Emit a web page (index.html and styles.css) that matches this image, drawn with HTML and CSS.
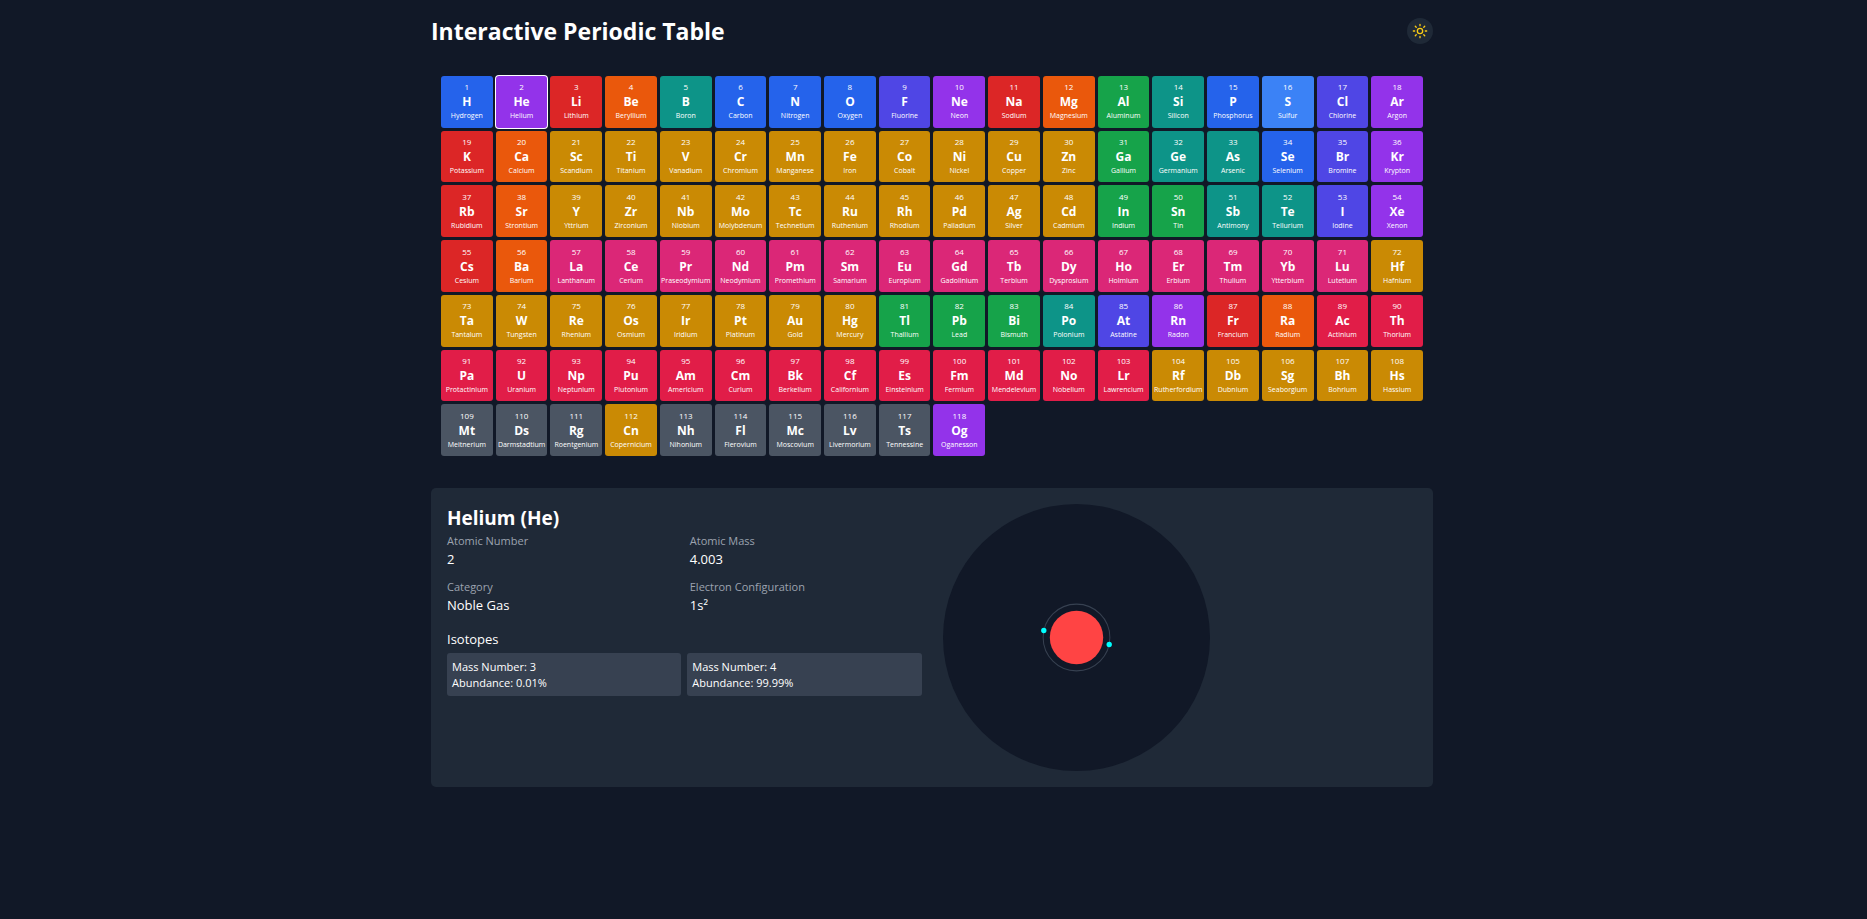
FILE: index.html
```html
<!DOCTYPE html>
<html lang="en">
<head>
<meta charset="utf-8">
<meta name="viewport" content="width=device-width, initial-scale=1">
<title>Interactive Periodic Table</title>
<link rel="stylesheet" href="styles.css">
</head>
<body>
<div class="container">
  <header class="header">
    <h1 class="title">Interactive Periodic Table</h1>
    <button class="theme-toggle" type="button" aria-label="Switch to light theme">
      <svg class="theme-icon" viewBox="0 0 24 24" fill="none" stroke="currentColor" stroke-width="2" stroke-linecap="round" stroke-linejoin="round" aria-hidden="true">
        <circle cx="12" cy="12" r="4"/>
        <path d="M12 2v2M12 20v2M4.93 4.93l1.41 1.41M17.66 17.66l1.41 1.41M2 12h2M20 12h2M6.34 17.66l-1.41 1.41M19.07 4.93l-1.41 1.41"/>
      </svg>
    </button>
  </header>

  <main>
    <div class="elements" id="elements"></div>

    <section class="details">
      <div class="info">
        <h2 class="name">Helium (He)</h2>
        <dl class="facts">
          <div><dt>Atomic Number</dt><dd>2</dd></div>
          <div><dt>Atomic Mass</dt><dd>4.003</dd></div>
          <div><dt>Category</dt><dd>Noble Gas</dd></div>
          <div><dt>Electron Configuration</dt><dd>1s²</dd></div>
        </dl>
        <h3 class="subhead">Isotopes</h3>
        <div class="isotopes">
          <div class="isotope"><p>Mass Number: 3</p><p>Abundance: 0.01%</p></div>
          <div class="isotope"><p>Mass Number: 4</p><p>Abundance: 99.99%</p></div>
        </div>
      </div>
      <svg class="atom" viewBox="0 0 400 400" role="img" aria-label="Helium atom with two electrons">
        <circle cx="200" cy="200" r="200" fill="#111827"/>
        <circle cx="200" cy="200" r="50" fill="none" stroke="#374151" stroke-width="1.5"/>
        <circle cx="200" cy="200" r="40" fill="#ff4444"/>
        <circle cx="151" cy="189.500" r="4" fill="#00ffff"/>
        <circle cx="249" cy="210.500" r="4" fill="#00ffff"/>
      </svg>
    </section>
  </main>
</div>
<script src="script.js"></script>
</body>
</html>
```
FILE: styles.css
```css
* {
  box-sizing: border-box;
  margin: 0;
  padding: 0;
}

body {
  min-height: 100vh;
  padding-right: 3px;
  background: #111827;
  color: #fff;
  font-family: "Open Sans", "Noto Sans", sans-serif;
  font-size: 13px;
  line-height: 18px;
}

.container {
  max-width: 1024px;
  margin: 0 auto;
  padding: 12px 11px;
}

.header {
  display: flex;
  align-items: center;
  justify-content: space-between;
  padding: 5px 0;
  margin-bottom: 16px;
}

.title {
  font-size: 23px;
  font-weight: 700;
  line-height: 28px;
}

.theme-toggle {
  display: flex;
  padding: 5px;
  border: 0;
  border-radius: 50%;
  background: #1f2937;
  color: #facc15;
  cursor: pointer;
}

.theme-icon {
  width: 16px;
  height: 16px;
}

.elements {
  display: grid;
  grid-template-columns: repeat(18, minmax(0, 1fr));
  gap: 3px;
  padding: 10px;
  margin-bottom: 22px;
}

.element {
  display: flex;
  flex-direction: column;
  align-items: center;
  justify-content: center;
  aspect-ratio: 1;
  border: 0;
  border-radius: 3px;
  color: #fff;
  font-family: inherit;
  white-space: nowrap;
  cursor: pointer;
}

.number {
  font-size: 8px;
  line-height: 12px;
}

.symbol {
  font-size: 12px;
  font-weight: 700;
  line-height: 17px;
}

.label {
  font-size: 7px;
  line-height: 12px;
}

.selected {
  box-shadow: 0 0 0 1px #fff;
}

.nonmetal { background: #2563eb; }
.sulfur { background: #3b82f6; }
.noble { background: #9333ea; }
.alkali { background: #dc2626; }
.alkaline { background: #ea580c; }
.metalloid { background: #0d9488; }
.halogen { background: #4f46e5; }
.post { background: #16a34a; }
.transition { background: #ca8a04; }
.lanthanide { background: #db2777; }
.actinide { background: #e11d48; }
.unknown { background: #4b5563; }

.details {
  display: grid;
  grid-template-columns: repeat(2, minmax(0, 1fr));
  gap: 21px;
  padding: 16px;
  border-radius: 5px;
  background: #1f2937;
}

.name {
  font-size: 19px;
  font-weight: 700;
  line-height: 28px;
}

.facts {
  display: grid;
  grid-template-columns: repeat(2, minmax(0, 1fr));
  gap: 10px 11px;
}

.facts dt {
  color: #9ca3af;
  font-size: 11px;
  line-height: 18px;
}

.facts dd {
  font-size: 13px;
}

.subhead {
  margin: 16px 0 5px;
  font-size: 13px;
  font-weight: 400;
}

.isotopes {
  display: grid;
  grid-template-columns: repeat(2, minmax(0, 1fr));
  gap: 6px;
}

.isotope {
  padding: 6px 5px 5px;
  border-radius: 3px;
  background: #374151;
  font-size: 11px;
  line-height: 16px;
}

.atom {
  width: 267px;
  height: 267px;
}
```
FILE: script.js
```js
const categories = {
  n: "nonmetal", s: "sulfur", g: "noble", a: "alkali", e: "alkaline", m: "metalloid",
  h: "halogen", p: "post", t: "transition", l: "lanthanide", c: "actinide", u: "unknown"
};

// symbol, name, category key; listed in order of atomic number
const elements = `H Hydrogen n,He Helium g,Li Lithium a,Be Beryllium e,B Boron m,C Carbon n,N Nitrogen n,O Oxygen n,F Fluorine h,Ne Neon g,
Na Sodium a,Mg Magnesium e,Al Aluminum p,Si Silicon m,P Phosphorus n,S Sulfur s,Cl Chlorine h,Ar Argon g,K Potassium a,Ca Calcium e,
Sc Scandium t,Ti Titanium t,V Vanadium t,Cr Chromium t,Mn Manganese t,Fe Iron t,Co Cobalt t,Ni Nickel t,Cu Copper t,Zn Zinc t,
Ga Gallium p,Ge Germanium m,As Arsenic m,Se Selenium n,Br Bromine h,Kr Krypton g,Rb Rubidium a,Sr Strontium e,Y Yttrium t,Zr Zirconium t,
Nb Niobium t,Mo Molybdenum t,Tc Technetium t,Ru Ruthenium t,Rh Rhodium t,Pd Palladium t,Ag Silver t,Cd Cadmium t,In Indium p,Sn Tin p,
Sb Antimony m,Te Tellurium m,I Iodine h,Xe Xenon g,Cs Cesium a,Ba Barium e,La Lanthanum l,Ce Cerium l,Pr Praseodymium l,Nd Neodymium l,
Pm Promethium l,Sm Samarium l,Eu Europium l,Gd Gadolinium l,Tb Terbium l,Dy Dysprosium l,Ho Holmium l,Er Erbium l,Tm Thulium l,Yb Ytterbium l,
Lu Lutetium l,Hf Hafnium t,Ta Tantalum t,W Tungsten t,Re Rhenium t,Os Osmium t,Ir Iridium t,Pt Platinum t,Au Gold t,Hg Mercury t,
Tl Thallium p,Pb Lead p,Bi Bismuth p,Po Polonium m,At Astatine h,Rn Radon g,Fr Francium a,Ra Radium e,Ac Actinium c,Th Thorium c,
Pa Protactinium c,U Uranium c,Np Neptunium c,Pu Plutonium c,Am Americium c,Cm Curium c,Bk Berkelium c,Cf Californium c,Es Einsteinium c,Fm Fermium c,
Md Mendelevium c,No Nobelium c,Lr Lawrencium c,Rf Rutherfordium t,Db Dubnium t,Sg Seaborgium t,Bh Bohrium t,Hs Hassium t,Mt Meitnerium u,Ds Darmstadtium u,
Rg Roentgenium u,Cn Copernicium t,Nh Nihonium u,Fl Flerovium u,Mc Moscovium u,Lv Livermorium u,Ts Tennessine u,Og Oganesson g`;

document.getElementById("elements").innerHTML = elements.split(",").map((entry, i) => {
  const [symbol, name, key] = entry.trim().split(" ");
  const selected = symbol === "He" ? " selected" : "";
  return `<button type="button" class="element ${categories[key]}${selected}"><span class="number">${i + 1}</span><span class="symbol">${symbol}</span><span class="label">${name}</span></button>`;
}).join("");
```
